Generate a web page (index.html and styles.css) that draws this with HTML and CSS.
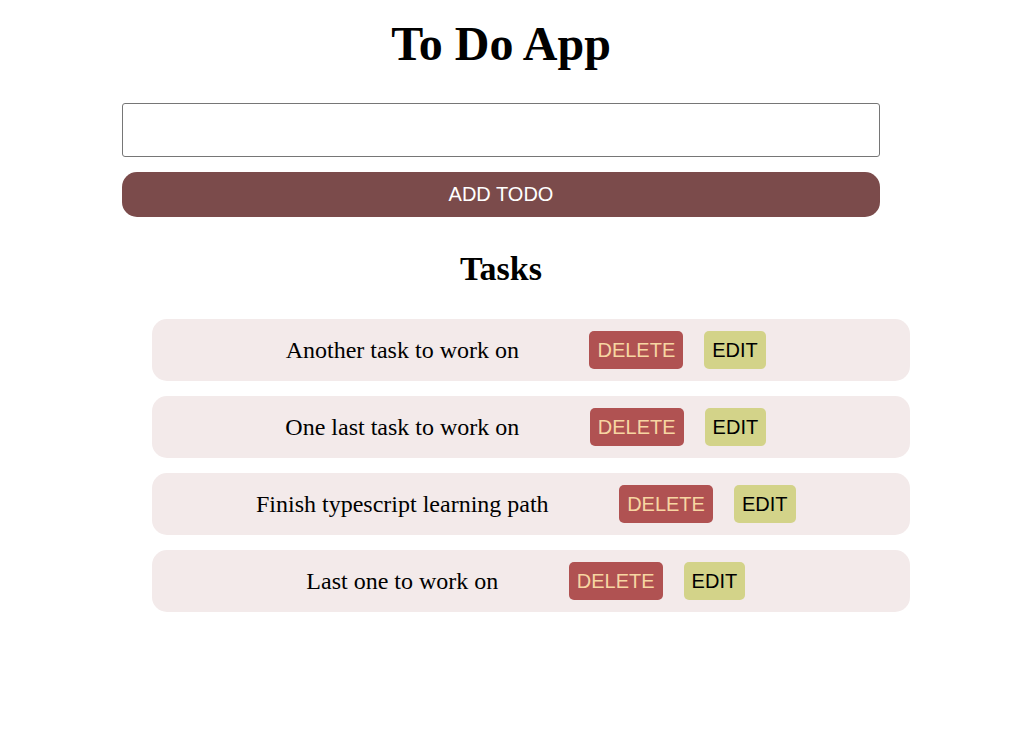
FILE: index.html
```html
<!DOCTYPE html>
<html lang="en">
<head>
<meta charset="utf-8">
<title>To Do App</title>
<link rel="stylesheet" href="styles.css">
</head>
<body>
<div class="app">
  <h1 class="title">To Do App</h1>
  <form class="add-form">
    <input class="todo-input" type="text">
    <button class="add-btn" type="button">ADD TODO</button>
  </form>
  <h2 class="tasks-title">Tasks</h2>
  <ul class="task-list">
    <li class="task"><span class="task-text">Another task to work on</span><button class="btn btn-delete">DELETE</button><button class="btn btn-edit">EDIT</button></li>
    <li class="task"><span class="task-text">One last task to work on</span><button class="btn btn-delete">DELETE</button><button class="btn btn-edit">EDIT</button></li>
    <li class="task"><span class="task-text">Finish typescript learning path</span><button class="btn btn-delete">DELETE</button><button class="btn btn-edit">EDIT</button></li>
    <li class="task"><span class="task-text">Last one to work on</span><button class="btn btn-delete">DELETE</button><button class="btn btn-edit">EDIT</button></li>
  </ul>
</div>
</body>
</html>
```
FILE: styles.css
```css
html, body {
  margin: 0;
  padding: 0;
  background: #ffffff;
}
body {
  font-family: "Liberation Serif", "Times New Roman", serif;
  color: #000;
}
.app {
  width: 758px;
  margin-left: 122px;
  padding-top: 17px;
}
.title {
  margin: 0;
  font-size: 48px;
  font-weight: bold;
  text-align: center;
  line-height: 53px;
}
.add-form {
  margin-top: 33px;
  display: flex;
  flex-direction: column;
  gap: 15px;
}
.todo-input {
  box-sizing: border-box;
  width: 758px;
  height: 54px;
  border: 1px solid #767676;
  border-radius: 3px;
  margin: 0;
  padding: 0 10px;
  font-size: 20px;
  font-family: "Liberation Sans", Arial, sans-serif;
}
.add-btn {
  width: 758px;
  height: 45px;
  border: none;
  border-radius: 15px;
  background: #7b4b4b;
  color: #ffffff;
  font-family: "Liberation Sans", Arial, sans-serif;
  font-size: 20px;
  margin: 0;
  padding: 0;
}
.tasks-title {
  margin: 33px 0 0;
  font-size: 34px;
  line-height: 38px;
  font-weight: bold;
  text-align: center;
}
.task-list {
  list-style: none;
  margin: 31px 0 0;
  padding: 0 0 0 30px;
  display: flex;
  flex-direction: column;
  gap: 15px;
}
.task {
  box-sizing: border-box;
  width: 758px;
  height: 62px;
  background: #f3eaea;
  border-radius: 15px;
  display: flex;
  align-items: center;
  justify-content: center;
}
.task-text {
  font-size: 24px;
  margin-right: 60px;
}
.btn {
  font-family: "Liberation Sans", Arial, sans-serif;
  font-size: 20px;
  line-height: 24px;
  padding: 7px 8px;
  border: none;
  border-radius: 5px;
  margin: 0 10.5px;
}
.btn-delete {
  background: #b05252;
  color: #f7d6a2;
}
.btn-edit {
  background: #d3d389;
  color: #000000;
}
```
